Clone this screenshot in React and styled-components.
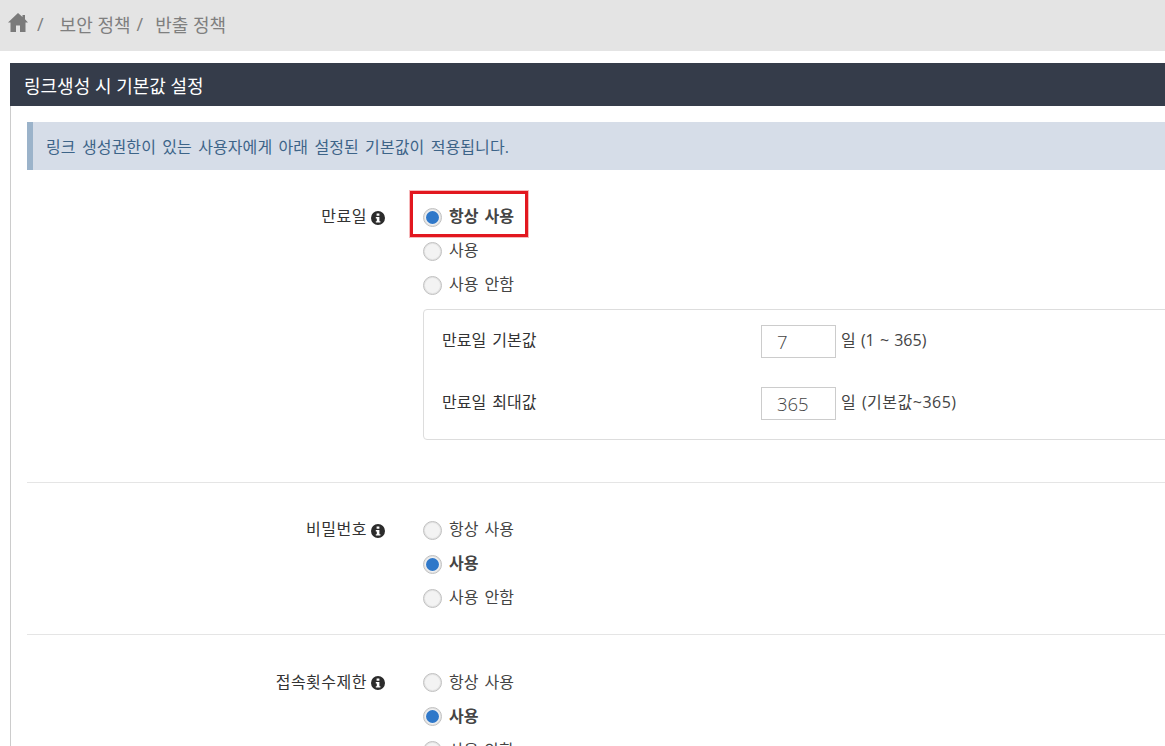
import React from "react";
import styled, { createGlobalStyle } from "styled-components";

const GlobalStyle = createGlobalStyle`
  html, body {
    margin: 0;
    padding: 0;
    height: 100%;
    overflow: hidden;
    background: #fff;
    color: #333;
    font-family: "Open Sans", "Noto Sans CJK KR", sans-serif;
    font-size: 16px;
    word-spacing: 2px;
  }
`;

const Page = styled.div`
  width: 1165px;
  height: 746px;
  overflow: hidden;
`;
const Breadcrumb = styled.div`
  height: 51px;
  background: #e4e4e4;
  display: flex;
  align-items: center;
  padding-left: 8px;
  padding-bottom: 4px;
  box-sizing: border-box;
  color: #7f7f7f;
  font-size: 18px;
  word-spacing: 0;
`;
const HomeIcon = styled.svg`
  width: 20px;
  height: 19px;
  fill: #7a7a7a;
  margin-top: -3px;
`;
const Crumb = styled.span`
  margin-left: ${(p) => p.$gap}px;
`;
const Panel = styled.section`
  margin: 12px -200px 0 10px;
  border-left: 1px solid #ccc;
`;
const PanelTitle = styled.h2`
  margin: 0 0 0 -1px;
  height: 43px;
  padding-left: 14px;
  display: flex;
  align-items: center;
  background: #353c4a;
  color: #fff;
  font-size: 18px;
  font-weight: 400;
  word-spacing: 0;
`;
const PanelBody = styled.div`
  padding: 16px 0 0 16px;
`;
const Notice = styled.div`
  height: 48px;
  box-sizing: border-box;
  padding-left: 13px;
  display: flex;
  align-items: center;
  background: #d6dde8;
  border-left: 6px solid #9bb3ca;
  color: #3d6488;
  letter-spacing: 0.1px;
`;
const Setting = styled.div`
  display: flex;
  padding: ${(p) => p.$top}px 0 ${(p) => p.$bottom}px;
  border-bottom: ${(p) => (p.$line ? "1px solid #e5e5e5" : "none")};
`;
const LabelCol = styled.div`
  width: 358px;
  height: 34px;
  flex: none;
  display: flex;
  align-items: center;
  justify-content: flex-end;
  gap: 4px;
  color: #333;
  letter-spacing: 0.5px;
`;
const RaisedText = styled.span`
  display: block;
  margin-top: -4px;
`;
const InfoIcon = styled.svg`
  width: 14px;
  height: 14px;
  flex: none;
  fill: #2b2b2b;
  margin-top: 1px;
`;
const Options = styled.div`
  margin-left: 38px;
  flex: 1;
`;
const RadioRow = styled.div`
  position: relative;
  height: 34px;
  display: flex;
  align-items: center;
  gap: 7px;
  font-weight: ${(p) => (p.$checked ? 700 : 400)};
  color: #444;
`;
const Radio = styled.span`
  width: 19px;
  height: 19px;
  flex: none;
  box-sizing: border-box;
  border-radius: 50%;
  border: 1px solid #c0c0c0;
  background: #f3f3f3;
  box-shadow: inset 0 0 0 1px #e2e2e2;
  display: flex;
  align-items: center;
  justify-content: center;
  &::after {
    content: "";
    display: ${(p) => (p.$checked ? "block" : "none")};
    width: 13px;
    height: 13px;
    border-radius: 50%;
    background: #2f78c9;
  }
`;
const Highlight = styled.span`
  position: absolute;
  left: -13px;
  top: -9px;
  width: 118px;
  height: 46px;
  box-sizing: border-box;
  border: 3px solid #e2171f;
  box-shadow: 0 0 0 1px rgba(226, 23, 31, 0.3);
  pointer-events: none;
`;
const SubPanel = styled.div`
  margin-top: 7px;
  height: 131px;
  box-sizing: border-box;
  padding: 15px 0 0 18px;
  border: 1px solid #ddd;
  border-radius: 4px;
`;
const SubRow = styled.div`
  display: flex;
  align-items: center;
  height: 33px;
  margin-bottom: 29px;
  color: #333;
`;
const SubLabel = styled.div`
  width: 319px;
  flex: none;
  margin-top: -5px;
`;
const NumberBox = styled.div`
  width: 75px;
  height: 33px;
  box-sizing: border-box;
  padding-left: 15px;
  display: flex;
  align-items: center;
  border: 1px solid #ccc;
  background: #fff;
  color: #444;
  font-size: 18.5px;
  font-weight: 300;
`;
const Hint = styled.span`
  margin-left: 5px;
  margin-top: -5px;
  color: #444;
  word-spacing: 1px;
  letter-spacing: ${(p) => p.$tracking || 0}px;
`;

const RadioGroup = ({ selected, boxed }) =>
  ["항상 사용", "사용", "사용 안함"].map((text, i) => (
    <RadioRow key={text} $checked={selected === i}>
      <Radio $checked={selected === i} />
      <RaisedText>{text}</RaisedText>
      {boxed && selected === i && <Highlight />}
    </RadioRow>
  ));

const Label = ({ children }) => (
  <LabelCol>
    <RaisedText>{children}</RaisedText>
    <InfoIcon viewBox="0 0 14 14">
      <path
        fillRule="evenodd"
        d="M7 0 A7 7 0 1 1 7 14 A7 7 0 1 1 7 0 Z M5.6 2.4 V4.8 H8.4 V2.4 Z M4.8 6 V7.4 H5.8 V10.2 H4.8 V11.6 H9.4 V10.2 H8.4 V6 Z"
      />
    </InfoIcon>
  </LabelCol>
);

export default function App() {
  return (
    <Page>
      <GlobalStyle />
      <Breadcrumb>
        <HomeIcon viewBox="0 0 20 19">
          <path d="M10 0 L14.5 4 V2 H17 V6.3 L20 9.5 H17.5 V19 H12 V12.5 H8 V19 H2.5 V9.5 H0 Z" />
        </HomeIcon>
        <Crumb $gap={9}>/</Crumb>
        <Crumb $gap={16}>보안 정책</Crumb>
        <Crumb $gap={6}>/</Crumb>
        <Crumb $gap={12}>반출 정책</Crumb>
      </Breadcrumb>
      <Panel>
        <PanelTitle>링크생성 시 기본값 설정</PanelTitle>
        <PanelBody>
          <Notice>링크 생성권한이 있는 사용자에게 아래 설정된 기본값이 적용됩니다.</Notice>
          <Setting $top={30} $bottom={42} $line>
            <Label>만료일</Label>
            <Options>
              <RadioGroup selected={0} boxed />
              <SubPanel>
                <SubRow>
                  <SubLabel>만료일 기본값</SubLabel>
                  <NumberBox>7</NumberBox>
                  <Hint>일 (1 ~ 365)</Hint>
                </SubRow>
                <SubRow>
                  <SubLabel>만료일 최대값</SubLabel>
                  <NumberBox>365</NumberBox>
                  <Hint $tracking={0.5}>일 (기본값~365)</Hint>
                </SubRow>
              </SubPanel>
            </Options>
          </Setting>
          <Setting $top={30} $bottom={19} $line>
            <Label>비밀번호</Label>
            <Options>
              <RadioGroup selected={1} />
            </Options>
          </Setting>
          <Setting $top={30.5} $bottom={0}>
            <Label>접속횟수제한</Label>
            <Options>
              <RadioGroup selected={1} />
            </Options>
          </Setting>
        </PanelBody>
      </Panel>
    </Page>
  );
}
